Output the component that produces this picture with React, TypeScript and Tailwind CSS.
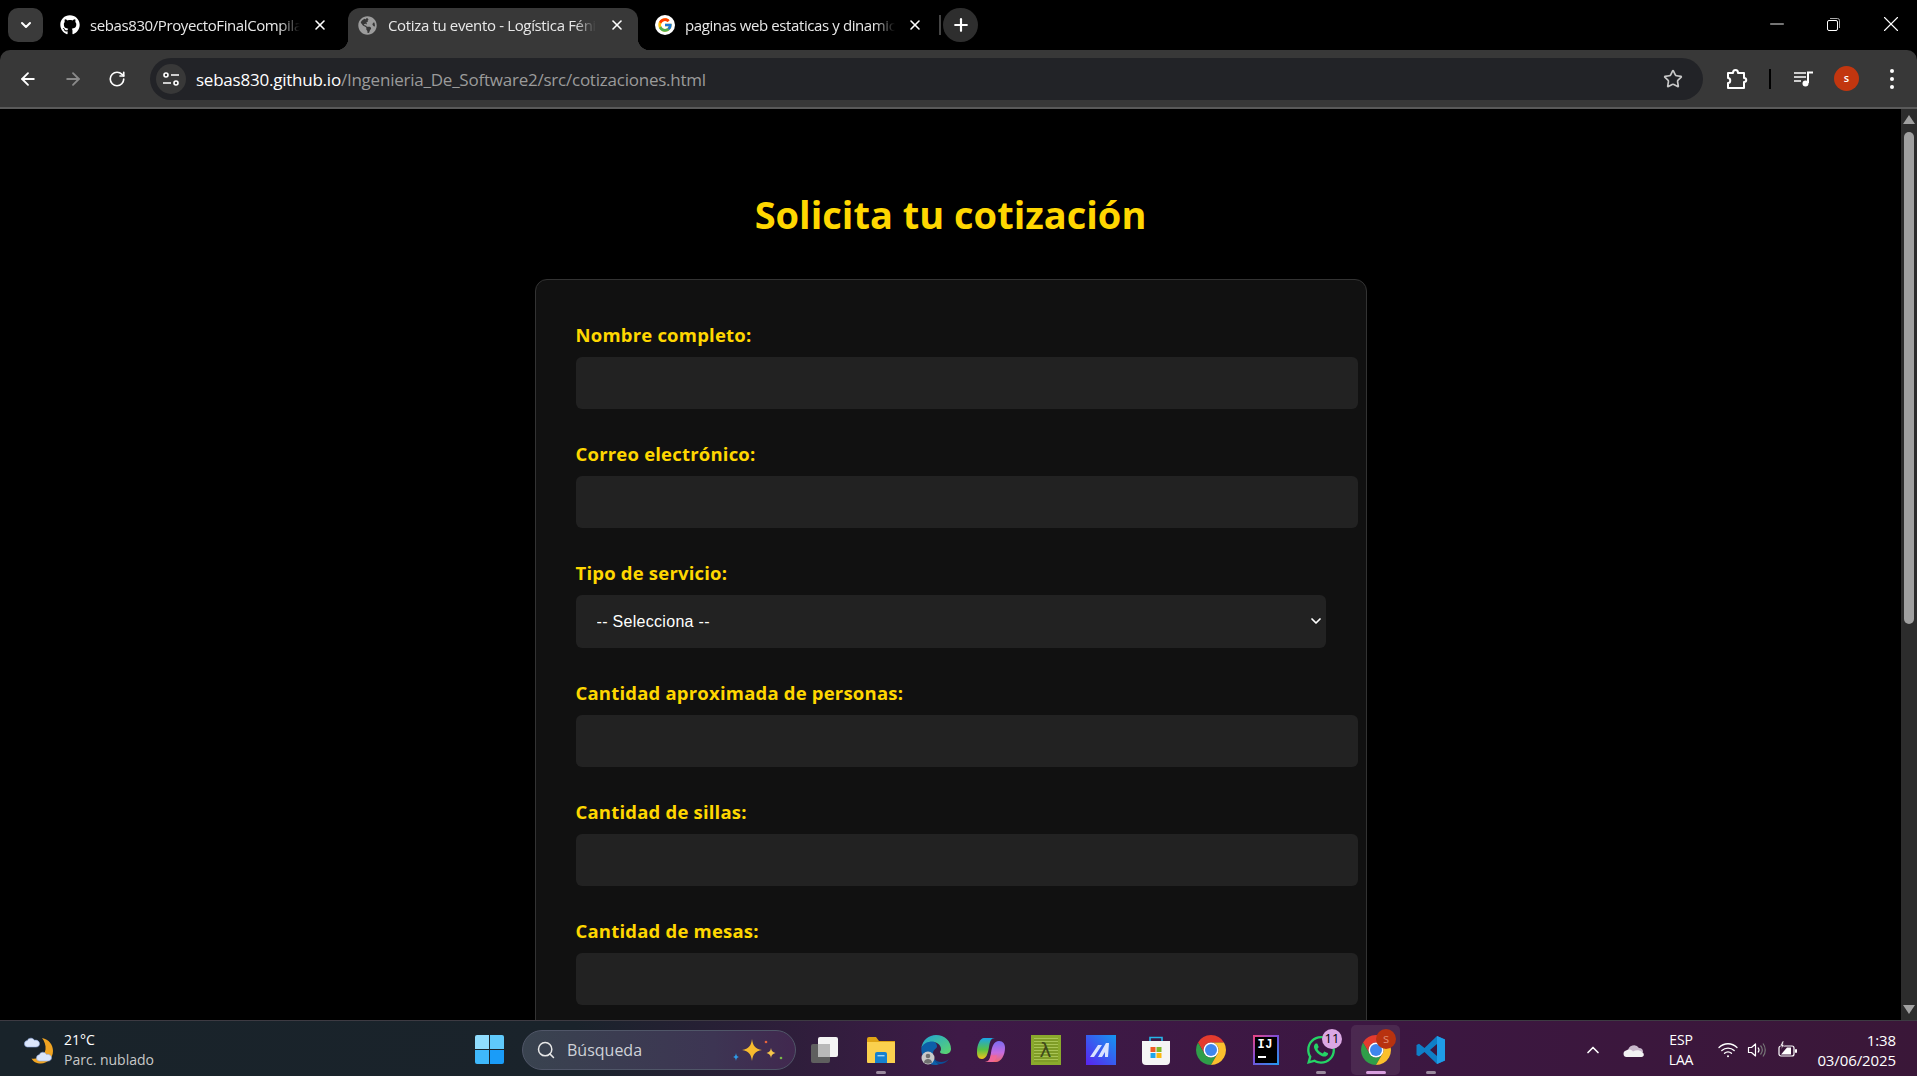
// App.tsx
import { ArrowLeft, ArrowRight, ChevronDown, ChevronUp, Minus, Plus, RotateCw, Search, Star, X } from "lucide-react";
import { FaGithub, FaGlobeAmericas, FaWhatsapp } from "react-icons/fa";
import { FcGoogle } from "react-icons/fc";

const campos = [
    { label: "Nombre completo:", tipo: "text" },
    { label: "Correo electrónico:", tipo: "email" },
    { label: "Tipo de servicio:", tipo: "select" },
    { label: "Cantidad aproximada de personas:", tipo: "number" },
    { label: "Cantidad de sillas:", tipo: "number" },
    { label: "Cantidad de mesas:", tipo: "number" },
];

const tabFade = "[mask-image:linear-gradient(to_right,black_90%,transparent)]";

function Tab({ icon, title, active }: { icon: React.ReactNode; title: string; active?: boolean }) {
    return (
        <div className={`relative flex items-center h-[42px] w-[290px] shrink-0 pl-[9px] pb-[8px] rounded-t-[12px] ${active ? "bg-[#383838]" : ""}`}>
            {active && (
                <>
                    <span className="absolute bottom-0 left-[-12px] w-[12px] h-[12px] bg-[radial-gradient(circle_at_0_0,transparent_12px,#383838_12.5px)]" />
                    <span className="absolute bottom-0 right-[-12px] w-[12px] h-[12px] bg-[radial-gradient(circle_at_100%_0,transparent_12px,#383838_12.5px)]" />
                </>
            )}
            <div className="w-[20px] h-[20px] shrink-0 flex items-center justify-center">{icon}</div>
            <span className={`ml-[11px] w-[208px] overflow-hidden whitespace-nowrap text-[15px] tracking-[-0.35px] text-[#e8e8e8] ${tabFade}`}>{title}</span>
            <X className="ml-[13px] text-white" size={16} strokeWidth={2.4} />
        </div>
    );
}

function ChromeIcon({ size = 30 }: { size?: number }) {
    return (
        <svg width={size} height={size} viewBox="4 4 40 40">
            <path fill="#e33b2e" d="M24 4A20 20 0 0 1 41.32 14H24A10 10 0 0 0 15.34 29L6.68 14A20 20 0 0 1 24 4Z" />
            <path fill="#2f9e49" d="M6.68 14L15.34 29A10 10 0 0 0 32.66 29L24 44A20 20 0 0 1 6.68 14Z" />
            <path fill="#fbc02d" d="M41.32 14H24A10 10 0 0 1 32.66 29L24 44A20 20 0 0 0 41.32 14Z" />
            <circle cx="24" cy="24" r="10" fill="#fff" />
            <circle cx="24" cy="24" r="8" fill="#3f86ee" />
        </svg>
    );
}

function TaskView() {
    return (
        <svg width="30" height="30" viewBox="0 0 30 30">
            <rect x="0" y="9" width="19" height="19" rx="2" fill="#5f5f5f" />
            <rect x="7" y="2" width="20" height="20" rx="2" fill="#f4f4f4" />
            <rect x="7" y="9" width="12" height="13" fill="#b9b9b9" />
        </svg>
    );
}

function Folder() {
    return (
        <svg width="30" height="30" viewBox="0 0 30 30">
            <path fill="#e0a415" d="M1 4a2 2 0 0 1 2-2h7l3 4h16v4H1z" />
            <path fill="#fbd04e" d="M1 7h27a1 1 0 0 1 1 1v20H2a1 1 0 0 1-1-1z" />
            <path fill="#1581cf" d="M9 19a2 2 0 0 1 2-2h8a2 2 0 0 1 2 2v9H9z" />
            <rect x="11.5" y="20" width="7" height="1.4" fill="#9fd5f7" />
        </svg>
    );
}

function Edge() {
    return (
        <svg width="30" height="30" viewBox="0 0 30 30">
            <defs>
                <linearGradient id="edgeTop" x1="0" y1="0" x2="1" y2="1">
                    <stop offset="0" stopColor="#1fa3d8" />
                    <stop offset="1" stopColor="#5ed66a" />
                </linearGradient>
            </defs>
            <path fill="url(#edgeTop)" d="M15 0c8.5 0 15 6 15 14 0 3-2.500 5-6 5-3 0-5-1-5-2 0-.6 1-1.200 1-3 0-4-4-7-8-7C6 7 1 11 .3 13 1.500 5 8 0 15 0z" />
            <path fill="#0d5fa8" d="M.3 13C2 8.500 7 6.500 11 6.500c3 0 5 2 5 5 0 2-3 2.500-4 6-.8 3 1 9 6 11.800-1 .3-2 .7-3.500.7C6 30 0 23 .3 13z" />
            <path fill="#0a4e96" d="M18 29.300c-3-1.500-6-4.500-6-9 0 4 4 6.700 8 6.700 3 0 6-1 8-3-2 3-5.500 5-10 5.300z" />
            <circle cx="7" cy="23" r="6.500" fill="#c9c9c9" />
            <circle cx="7" cy="21" r="2.300" fill="#6f6f6f" />
            <path fill="#6f6f6f" d="M2.800 27.500c.5-2.500 2.200-3.500 4.200-3.500s3.700 1 4.200 3.500c-2.500 1.500-5.900 1.500-8.400 0z" />
        </svg>
    );
}

function Copilot() {
    return (
        <svg width="30" height="30" viewBox="0 0 30 30">
            <defs>
                <linearGradient id="copA" x1="0" y1="0" x2="0" y2="1">
                    <stop offset="0" stopColor="#1aa5e8" />
                    <stop offset="0.55" stopColor="#58c145" />
                    <stop offset="1" stopColor="#f3c21b" />
                </linearGradient>
                <linearGradient id="copB" x1="0" y1="0" x2="0" y2="1">
                    <stop offset="0" stopColor="#7a6cf0" />
                    <stop offset="0.55" stopColor="#c56ce0" />
                    <stop offset="1" stopColor="#f26a6a" />
                </linearGradient>
            </defs>
            <path fill="url(#copB)" d="M9 27c4 0 5-3 6-9 1-7 3-12 8-12 4 0 6 3 6 7 0 7-4 14-9 14z" />
            <path fill="url(#copA)" d="M8 3h11c-4 0-5 3-6 9-1 7-3 12-7 12-4 0-5-3-5-7C1 10 4 3 8 3z" />
            <path fill="#f0679a" d="M9 27c4 0 5-3 6-7 3 1 4 0 6 0-1 5-3 7-5 7z" />
        </svg>
    );
}

function Lambda() {
    return (
        <div className="flex items-center justify-center w-[30px] h-[30px] bg-[#8aa92c] p-[3px]">
            <div className="flex items-center justify-center w-full h-full bg-[repeating-linear-gradient(to_bottom,#a9c455_0,#a9c455_1px,#7f9c27_1px,#7f9c27_3px)] font-['DejaVu_Sans',sans-serif] text-[20px] leading-none text-[#3f4a1c]">λ</div>
        </div>
    );
}

function MApp() {
    return (
        <svg width="30" height="30" viewBox="0 0 30 30">
            <defs>
                <linearGradient id="mGrad" x1="0" y1="1" x2="1" y2="0">
                    <stop offset="0" stopColor="#5a22f0" />
                    <stop offset="1" stopColor="#1497f0" />
                </linearGradient>
            </defs>
            <rect width="30" height="30" fill="url(#mGrad)" />
            <path fill="#d9e2ff" d="M4 22L12 10h4L8 22zM12 22L20 8h3l-1 14h-3v-5l-3 5z" />
        </svg>
    );
}

function Store() {
    return (
        <svg width="30" height="30" viewBox="0 0 30 30">
            <path fill="none" stroke="#26b5e8" strokeWidth="1.600" d="M9 8V2.500h12V8" />
            <path fill="#f5f5f5" d="M1 6h28v20a4 4 0 0 1-4 4H5a4 4 0 0 1-4-4z" />
            <rect x="9.500" y="12" width="5" height="5" fill="#ef5a24" />
            <rect x="15.500" y="12" width="5" height="5" fill="#7eb92a" />
            <rect x="9.500" y="18" width="5" height="5" fill="#1ea5ea" />
            <rect x="15.500" y="18" width="5" height="5" fill="#fbb80f" />
        </svg>
    );
}

function Idea() {
    return (
        <div className="w-[26px] h-[30px] bg-[linear-gradient(135deg,#f0447f,#7b4dd8_45%,#1e9cf0)] p-[2px]">
            <div className="flex flex-col w-full h-full bg-black pl-[3px] pt-[1px]">
                <span className="font-['Liberation_Mono',monospace] font-bold text-[12px] leading-[14px] text-white tracking-[0.5px]">IJ</span>
                <span className="mt-[4px] w-[8px] h-[2px] bg-white" />
            </div>
        </div>
    );
}

function VsCode() {
    return (
        <svg width="30" height="30" viewBox="0 0 30 30">
            <path fill="#0f7fc7" d="M21 1L8.500 13 3 8.800 .5 10v10L3 21.200 8.500 17 21 29l8-3.500V4.500zM21 9v12l-7-6z" />
            <path fill="#1f9ce8" d="M21 1l8 3.500v21L21 29z" />
        </svg>
    );
}

function Wifi() {
    return (
        <svg width="20" height="18" viewBox="0 0 20 18" fill="none" stroke="#fff" strokeWidth="1.300" strokeLinecap="round">
            <path d="M1 6.500c5-5 13-5 18 0" />
            <path d="M3.800 9.500c3.500-3.300 9-3.300 12.400 0" />
            <path d="M6.500 12.300c2-1.800 5-1.800 7 0" />
            <circle cx="10" cy="15.200" r="1" fill="#fff" stroke="none" />
        </svg>
    );
}

function Volume() {
    return (
        <svg width="20" height="18" viewBox="0 0 20 18" fill="none" stroke="#fff" strokeWidth="1.200" strokeLinejoin="round">
            <path d="M1.500 6.500h3l4-3.500v12l-4-3.500h-3z" />
            <path d="M11 6.500c1.200 1.500 1.200 3.500 0 5" />
            <path stroke="#777" d="M13.500 4.500c2.200 2.700 2.200 6.300 0 9M16 2.500c3 3.800 3 9.200 0 13" />
        </svg>
    );
}

function Battery() {
    return (
        <svg width="20" height="18" viewBox="0 0 20 18" fill="none">
            <rect x="1" y="5" width="15" height="10" rx="2" stroke="#fff" strokeWidth="1.200" />
            <rect x="17" y="8" width="2" height="4" rx="1" fill="#fff" />
            <path fill="#fff" d="M3 13.500L9 6.500h4v7z" />
            <path fill="#fff" stroke="#3a1638" strokeWidth=".6" d="M4.500 0L2 5h2L3 8.500 6.500 3.800H4.800L6 0z" />
        </svg>
    );
}

function Weather() {
    return (
        <svg width="32" height="30" viewBox="0 0 32 30">
            <path fill="#f0a422" d="M18 3c7 1.500 11 6.500 11 13 0 7.500-6 12.500-12 12.500-4.500 0-8-2-9.500-5 6 1 13-2 14-9 .5-4-1-8.500-3.500-11.500z" />
            <path fill="#dbe6fb" stroke="#8fa8e0" strokeWidth=".6" d="M3 12a3.300 3.300 0 0 1 .4-6.500c.8-2.800 5.500-3.200 6.900-.3 3.200-.5 5.200 1.300 5.200 3.500 0 2-1.500 3.300-3.500 3.300z" />
            <path fill="#dbe6fb" stroke="#8fa8e0" strokeWidth=".6" d="M15 26a3.200 3.200 0 0 1 .3-6.300c.8-3 5.700-3.400 7-.3 3-.5 5.200 1.200 5.200 3.400 0 2-1.500 3.200-3.500 3.200z" />
        </svg>
    );
}

function Cloud() {
    return (
        <svg width="22" height="14" viewBox="0 0 22 14">
            <path fill="#c9b8cc" d="M5 8a6 6 0 0 1 11-3 4 4 0 0 1 4 4H8z" />
            <path fill="#f2f2f2" d="M3.500 14a3.300 3.300 0 0 1-.4-6.500C5 6 8 6 10 8.500c3-2 7-1.500 9 .5 2.500 1 2.500 5-.5 5z" />
        </svg>
    );
}

function Sparkles() {
    return (
        <svg width="52" height="26" viewBox="0 0 52 26">
            <path fill="#f7bb2e" d="M20 2c1 7 3 9.500 10 11-7 1.500-9 4-10 11-1-7-3-9.500-10-11 7-1.500 9-4 10-11z" />
            <path fill="#f7c64a" d="M39 11c.5 3 1.500 4 4.500 5-3 1-4 2-4.500 5-.5-3-1.500-4-4.500-5 3-1 4-2 4.500-5z" />
            <path fill="#2e9be8" d="M4 16c.3 2.500 1 3.200 3 4-2 .8-2.700 1.500-3 4-.3-2.500-1-3.200-3-4 2-.8 2.700-1.500 3-4z" />
            <circle cx="34" cy="5" r="1.300" fill="#e8643c" />
            <circle cx="49" cy="21" r="1.300" fill="#7ab648" />
        </svg>
    );
}

const apps = [
    { icon: <TaskView /> },
    { icon: <Folder />, pill: true },
    { icon: <Edge /> },
    { icon: <Copilot /> },
    { icon: <Lambda /> },
    { icon: <MApp /> },
    { icon: <Store /> },
    { icon: <ChromeIcon /> },
    { icon: <Idea /> },
    { icon: <FaWhatsapp size={32} color="#25d366" />, pill: true, badge: "11" },
    { icon: <ChromeIcon />, active: true, badge: "s" },
    { icon: <VsCode />, pill: true },
];

export default function App() {
    return (
        <div className="flex flex-col h-screen overflow-hidden bg-black font-['Open_Sans',sans-serif] text-white">
            {/* pestañas */}
            <div className="flex items-end h-[50px] shrink-0 pl-[8px]">
                <div className="flex items-center justify-center w-[35px] h-[34px] mb-[8px] rounded-[10px] bg-[#3a3a3a]">
                    <ChevronDown size={16} strokeWidth={3} />
                </div>
                <div className="flex ml-[5px] w-[300px]">
                    <div className="flex items-center h-[42px] pl-[12px] pb-[8px]">
                        <FaGithub size={20} />
                        <span className={`ml-[10px] w-[210px] overflow-hidden whitespace-nowrap text-[15px] tracking-[-0.4px] text-[#e8e8e8] ${tabFade}`}>sebas830/ProyectoFinalCompilador</span>
                        <X className="ml-[12px]" size={16} strokeWidth={2.4} />
                    </div>
                </div>
                <Tab active icon={<FaGlobeAmericas size={19} color="#9c9c9c" />} title="Cotiza tu evento - Logística Fénix" />
                <div className="flex items-center h-[42px] pl-[17px] pb-[8px]">
                    <div className="flex items-center justify-center w-[20px] h-[20px] rounded-full bg-white">
                        <FcGoogle size={16} />
                    </div>
                    <span className={`ml-[10px] w-[210px] overflow-hidden whitespace-nowrap text-[15px] tracking-[-0.4px] text-[#e8e8e8] ${tabFade}`}>paginas web estaticas y dinamicas</span>
                    <X className="ml-[12px]" size={16} strokeWidth={2.4} />
                    <span className="ml-[16px] w-[2px] h-[20px] bg-[#444]" />
                    <div className="flex items-center justify-center ml-[2px] w-[35px] h-[34px] rounded-full bg-[#2e2e2e]">
                        <Plus size={20} strokeWidth={2.6} />
                    </div>
                </div>
                <div className="flex items-center ml-auto h-[50px] pb-[2px]">
                    <Minus className="mr-[39px]" size={22} strokeWidth={1} />
                    <svg className="mr-[38px]" width="13" height="13" viewBox="0 0 13 13" fill="none" stroke="#fff" strokeWidth="1">
                        <rect x=".5" y="2.500" width="10" height="10" rx="1.500" />
                        <path d="M3 .5h7.500a2 2 0 0 1 2 2V10" stroke="#aaa" />
                    </svg>
                    <X className="mr-[13px]" size={26} strokeWidth={1} />
                </div>
            </div>

            {/* barra de direcciones */}
            <div className="flex items-center h-[57px] shrink-0 rounded-t-[10px] bg-[#383838] pr-[25px]">
                <div className="flex items-center w-[150px] shrink-0 pl-[18px] gap-[25px]">
                    <ArrowLeft size={20} strokeWidth={2.2} />
                    <ArrowRight size={20} strokeWidth={2.2} className="text-[#8a8a8a]" />
                    <RotateCw size={18} strokeWidth={2.2} />
                </div>
                <div className="flex items-center flex-1 h-[42px] rounded-full bg-[#222327] pl-[6px] pr-[20px]">
                    <div className="flex items-center justify-center w-[30px] h-[30px] rounded-full bg-[#383838]">
                        <svg width="18" height="16" viewBox="0 0 18 16" fill="none" stroke="#fff" strokeWidth="1.600">
                            <circle cx="4" cy="4" r="2" />
                            <path d="M9 4h8M1 12h8" />
                            <circle cx="14" cy="12" r="2" />
                        </svg>
                    </div>
                    <span className="ml-[10px] pt-[2px] text-[17px] tracking-[-0.23px] whitespace-nowrap text-white">
                        sebas830.github.io<span className="text-[#9b9b9b]">/Ingenieria_De_Software2/src/cotizaciones.html</span>
                    </span>
                    <Star className="ml-auto text-[#c8c8c8]" size={20} strokeWidth={2} />
                </div>
                <svg className="ml-[23px]" width="22" height="22" viewBox="0 0 22 22" fill="none" stroke="#fff" strokeWidth="2" strokeLinejoin="round">
                    <path d="M2 5h5c0-4 5-4 5 0h6v5c3 0 3 4 0 4v6H2v-5c3 0 3-5 0-5z" />
                </svg>
                <span className="ml-[21px] w-[2px] h-[20px] bg-black" />
                <svg className="ml-[23px]" width="20" height="16" viewBox="0 0 20 16" fill="none" stroke="#fff" strokeWidth="1.600">
                    <path d="M0 2h12M0 6h12M0 10h7" />
                    <path d="M14 12V1.500h5" strokeWidth="2" />
                    <circle cx="11.500" cy="12.500" r="3" fill="#fff" stroke="none" />
                </svg>
                <div className="flex items-center justify-center ml-[20px] w-[25px] h-[25px] rounded-full bg-[#c2360f] text-[11px] font-semibold">s</div>
                <div className="flex flex-col gap-[4px] ml-[31px] mr-[-2px]">
                    <span className="w-[4px] h-[4px] rounded-full bg-white" />
                    <span className="w-[4px] h-[4px] rounded-full bg-white" />
                    <span className="w-[4px] h-[4px] rounded-full bg-white" />
                </div>
            </div>
            <div className="h-[2px] shrink-0 bg-[#5a5a5a]" />

            {/* pagina */}
            <div className="flex flex-1 min-h-0">
                <main className="flex-1 overflow-hidden bg-black">
                    <h1 className="mt-[81px] text-center font-bold text-[38px] leading-[48px] text-[#ffd700]">Solicita tu cotización</h1>
                    <form className="mt-[41px] mx-auto w-[832px] rounded-t-[12px] border border-[#333] bg-[#111] p-[40px]">
                        {campos.map((campo) => (
                            <div key={campo.label} className="mb-[30.2px]">
                                <label className="block h-[24px] mb-[13px] font-bold text-[18.5px] leading-[29px] tracking-[0.2px] text-[#ffd700]">{campo.label}</label>
                                {campo.tipo === "select" ? (
                                    <div className="relative w-[750px] h-[53px] -mb-[1px]">
                                        <select className="appearance-none w-full h-full rounded-[6px] bg-[#222] pl-[21px] font-['Liberation_Sans',sans-serif] text-[16px] tracking-[0.3px] text-white">
                                            <option>-- Selecciona --</option>
                                        </select>
                                        <ChevronDown className="absolute right-[2px] top-[18px]" size={16} strokeWidth={2.6} />
                                    </div>
                                ) : (
                                    <input type={campo.tipo} className="block w-[782px] h-[52px] rounded-[6px] bg-[#222] px-[16px] outline-none" />
                                )}
                            </div>
                        ))}
                    </form>
                </main>
                <div className="flex flex-col items-center w-[16px] shrink-0 bg-[#2c2c2c] py-[6px]">
                    <span className="w-0 h-0 border-x-[6px] border-x-transparent border-b-[9px] border-b-[#a0a0a0]" />
                    <span className="w-[10px] h-[492px] mt-[8px] mb-auto rounded-full bg-[#a0a0a0]" />
                    <span className="w-0 h-0 border-x-[6px] border-x-transparent border-t-[9px] border-t-[#a0a0a0]" />
                </div>
            </div>

            {/* barra de tareas */}
            <div className="flex items-center h-[56px] shrink-0 border-t border-[#3d3a42] pt-[2px] bg-[linear-gradient(to_right,#19232a_0%,#1a232b_30%,#3e1a47_50%,#3c1742_70%,#3a1738_100%)] text-[14px]">
                <div className="flex items-center w-[462px] shrink-0 pl-[24px]">
                    <Weather />
                    <div className="ml-[8px] leading-[20px]">
                        <div>21°C</div>
                        <div className="text-[#c8c8c8]">Parc. nublado</div>
                    </div>
                </div>
                <div className="flex items-center justify-center w-[55px] shrink-0">
                    <div className="grid grid-cols-2 gap-[1px] w-[29px] h-[29px]">
                        <span className="bg-[#8fdcfd] rounded-tl-[2px]" />
                        <span className="bg-[#5fc9fb] rounded-tr-[2px]" />
                        <span className="bg-[#3fb8fb] rounded-bl-[2px]" />
                        <span className="bg-[#1a9cf8] rounded-br-[2px]" />
                    </div>
                </div>
                <div className="flex items-center ml-[5px] w-[274px] h-[40px] shrink-0 rounded-full border border-[#505668] bg-[linear-gradient(to_right,#39434f,#3d3553_70%,#41284f)] pl-[13px] pr-[11px]">
                    <Search size={20} strokeWidth={1.8} className="text-[#e8e8e8]" />
                    <span className="ml-[11px] text-[16px] text-[#cfd2d8]">Búsqueda</span>
                    <div className="ml-auto">
                        <Sparkles />
                    </div>
                </div>
                <div className="flex ml-[2px] shrink-0">
                    {apps.map((app, i) => (
                        <div key={i} className="relative flex items-center justify-center w-[55px] h-[50px] shrink-0">
                            {app.active && <span className="absolute inset-y-0 left-[3px] right-[3px] rounded-[5px] bg-white/8" />}
                            <div className="relative flex items-center justify-center">{app.icon}</div>
                            {app.badge && (
                                <span className={`absolute top-[4px] flex items-center justify-center w-[20px] h-[20px] rounded-full text-[13px] ${app.active ? "right-[7px] bg-[#b8320f] text-[#e08a70]" : "right-[6px] bg-[#dba8e4] text-black"}`}>{app.badge}</span>
                            )}
                            {app.pill && <span className="absolute bottom-[1px] w-[10px] h-[3px] rounded-full bg-[#9a8a9e]" />}
                            {app.active && <span className="absolute bottom-[1px] w-[20px] h-[3px] rounded-full bg-[#d9a0e0]" />}
                        </div>
                    ))}
                </div>
                <ChevronUp className="ml-[125px]" size={20} strokeWidth={2} />
                <div className="ml-[20px]">
                    <Cloud />
                </div>
                <div className="ml-[20px] w-[32px] text-center leading-[20px] tracking-[-0.2px]">
                    <div>ESP</div>
                    <div>LAA</div>
                </div>
                <div className="flex items-center ml-[21px]">
                    <Wifi />
                    <span className="ml-[9px]">
                        <Volume />
                    </span>
                    <span className="ml-[11px]">
                        <Battery />
                    </span>
                </div>
                <div className="ml-auto pr-[21px] text-right text-[15px] leading-[20px] tracking-[-0.1px]">
                    <div>1:38</div>
                    <div>03/06/2025</div>
                </div>
            </div>
        </div>
    );
}
